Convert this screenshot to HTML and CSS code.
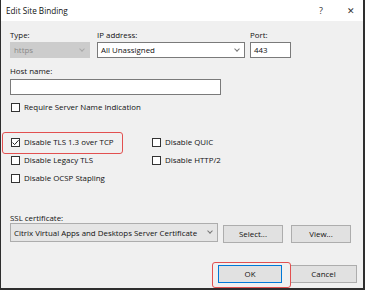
FILE: index.html
```html
<!DOCTYPE html>
<html>
<head>
<meta charset="utf-8">
<link rel="stylesheet" href="styles.css">
</head>
<body>
<div class="dialog">
  <div class="titlebar">
    <span class="title">Edit Site Binding</span>
    <span class="help">?</span>
    <span class="close">✕</span>
  </div>
  <div class="body">
    <div class="row1">
      <div class="field f-type">
        <div class="label">Type:</div>
        <div class="combo disabled"><span class="val">https</span><span class="chev"></span></div>
      </div>
      <div class="field f-ip">
        <div class="label">IP address:</div>
        <div class="combo"><span class="val">All Unassigned</span><span class="chev"></span></div>
      </div>
      <div class="field f-port">
        <div class="label">Port:</div>
        <div class="input"><span class="val">443</span></div>
      </div>
    </div>
    <div class="label host-label">Host name:</div>
    <div class="input host"></div>
    <div class="check sni"><span class="box"></span><span>Require Server Name Indication</span></div>

    <div class="grid">
      <div class="check hl"><span class="box checked"><svg viewBox="0 0 9 9" width="9" height="9"><path d="M1.6 4.6 L3.6 6.6 L7.6 2.2" fill="none" stroke="#222" stroke-width="1"/></svg></span><span>Disable TLS 1.3 over TCP</span></div>
      <div class="check"><span class="box"></span><span>Disable QUIC</span></div>
      <div class="check"><span class="box"></span><span>Disable Legacy TLS</span></div>
      <div class="check"><span class="box"></span><span>Disable HTTP/2</span></div>
      <div class="check"><span class="box"></span><span>Disable OCSP Stapling</span></div>
    </div>

    <div class="label ssl-label">SSL certificate:</div>
    <div class="ssl-row">
      <div class="combo ssl"><span class="val">Citrix Virtual Apps and Desktops Server Certificate</span><span class="chev"></span></div>
      <div class="btn select">Select...</div>
      <div class="btn view">View...</div>
    </div>

    <div class="footer">
      <div class="btn ok hl2">OK</div>
      <div class="btn cancel">Cancel</div>
    </div>
  </div>
</div>
</body>
</html>
```
FILE: styles.css
```css
* { box-sizing: border-box; }
html, body { margin: 0; padding: 0; }
body {
  width: 365px; height: 290px; overflow: hidden;
  font-family: "Open Sans", "Noto Sans", sans-serif;
  font-size: 7.9px; color: #111;
}
.dialog {
  width: 365px; height: 290px;
  background: #f0f0f0;
  border-left: 1px solid #2e2e2e;
  border-right: 2px solid #2e2e2e;
  border-bottom: 2px solid #2e2e2e;
  display: flex; flex-direction: column;
}
.titlebar {
  height: 21px; flex: none;
  background: #fff;
  display: flex; align-items: center;
  padding-left: 5px;
  font-size: 8.2px;
}
.title { flex: 1; }
.help { width: 10px; margin-right: 20px; color: #333; font-size: 9px; text-align: center; }
.close { width: 10px; margin-right: 7px; color: #333; font-size: 9px; text-align: center; }

.body { padding: 9px 0 0 9px; flex: 1; display: flex; flex-direction: column; }
.label { line-height: 11px; height: 11px; margin-bottom: 1px; white-space: nowrap; }
.row1 { display: flex; }
.f-type { width: 80px; margin-right: 7px; }
.f-ip { width: 148px; margin-right: 5px; }
.f-port { width: 41px; }

.combo, .input {
  height: 16px;
  background: #fff;
  border: 1px solid #7a7a7a;
  display: flex; align-items: center;
  padding-left: 3px;
  white-space: nowrap; overflow: hidden;
}
.combo .val, .input .val { flex: 1; }
.combo.disabled { background: #cccccc; border-color: #cccccc; color: #8a8a8a; }
.chev {
  width: 4px; height: 4px; margin: 0 5px 3px 0;
  border-right: 1px solid #777; border-bottom: 1px solid #777;
  transform: rotate(45deg);
  flex: none;
}
.disabled .chev { border-color: #a9a9a9; }

.host-label { margin-top: 8px; margin-bottom: 2px; }
.input.host { width: 211px; }

.check { display: flex; align-items: center; height: 12px; white-space: nowrap; }
.box {
  width: 9px; height: 9px; flex: none;
  border: 1px solid #333; background: #fff;
  margin: 0 4px 0 1px;
  display: flex;
}
.box svg { margin: -1px; }
.sni { margin-top: 6px; }

.grid {
  margin-top: 20px;
  display: grid;
  grid-template-columns: 141px auto;
  grid-auto-rows: 18px;
}
.grid .check { height: 18px; }
.hl { position: relative; }
.hl::after {
  content: ""; position: absolute;
  left: -8px; top: -1px; width: 119px; height: 20px;
  border: 1.5px solid #e25050; border-radius: 3px;
}

.ssl-label { margin-top: 27px; height: 9px; line-height: 9px; margin-bottom: 0; }
.ssl-row { display: flex; align-items: flex-start; }
.combo.ssl { width: 208px; height: 19px; border-color: #adadad; background: #e5e5e5; }
.btn {
  height: 18px;
  background: #e1e1e1;
  border: 1px solid #adadad;
  display: flex; align-items: center; justify-content: center;
  white-space: nowrap;
}
.select { width: 60px; margin-left: 5px; margin-top: 2px; }
.view { width: 60px; margin-left: 8px; margin-top: 2px; }

.footer { display: flex; margin-top: 22px; padding-left: 208px; }
.ok { width: 64px; border-color: #0078d7; position: relative; }
.cancel { width: 67px; margin-left: 8px; }
.hl2::after {
  content: ""; position: absolute;
  left: -7px; top: -4px; width: 77px; height: 24px;
  border: 1.5px solid #e25050; border-radius: 3px;
}
```
